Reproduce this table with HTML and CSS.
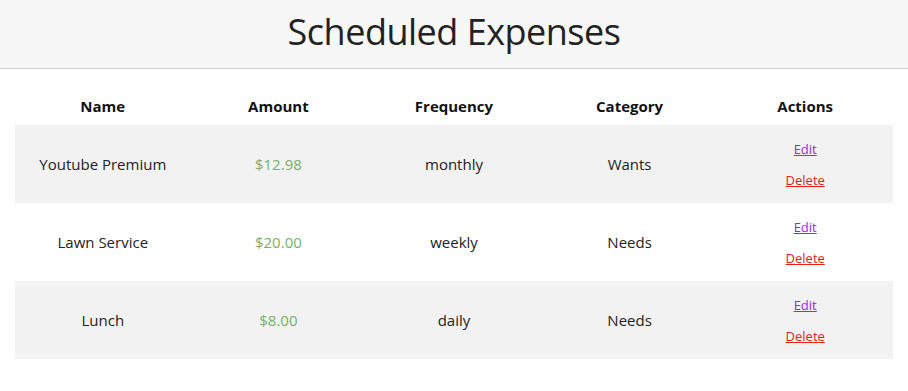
FILE: index.html
```html
<!DOCTYPE html>
<html>
<head>
<meta charset="utf-8">
<link rel="stylesheet" href="styles.css">
</head>
<body>
<header class="page-header">
  <h1 class="title">Scheduled Expenses</h1>
</header>
<main class="content">
  <table class="expenses">
    <thead>
      <tr>
        <th>Name</th>
        <th>Amount</th>
        <th>Frequency</th>
        <th>Category</th>
        <th>Actions</th>
      </tr>
    </thead>
    <tbody>
      <tr>
        <td>Youtube Premium</td>
        <td class="amount">$12.98</td>
        <td>monthly</td>
        <td>Wants</td>
        <td class="actions"><a class="edit" href="#">Edit</a><a class="delete" href="#">Delete</a></td>
      </tr>
      <tr>
        <td>Lawn Service</td>
        <td class="amount">$20.00</td>
        <td>weekly</td>
        <td>Needs</td>
        <td class="actions"><a class="edit" href="#">Edit</a><a class="delete" href="#">Delete</a></td>
      </tr>
      <tr>
        <td>Lunch</td>
        <td class="amount">$8.00</td>
        <td>daily</td>
        <td>Needs</td>
        <td class="actions"><a class="edit" href="#">Edit</a><a class="delete" href="#">Delete</a></td>
      </tr>
    </tbody>
  </table>
</main>
</body>
</html>
```

FILE: styles.css
```css
html, body {
  margin: 0;
  padding: 0;
  background: #ffffff;
}
body {
  font-family: "Open Sans", "Noto Sans", sans-serif;
  color: #222222;
}
.page-header {
  background: #f7f7f7;
  border-bottom: 1px solid #cfcfcf;
  height: 63px;
  padding-bottom: 5px;
  display: flex;
  align-items: center;
  justify-content: center;
}
.title {
  margin: 0;
  font-weight: 400;
  font-size: 36px;
  color: #222222;
  letter-spacing: -0.5px;
}
.content {
  padding: 17px 15px 0;
}
.expenses {
  width: 100%;
  border-collapse: collapse;
  table-layout: fixed;
}
.expenses th {
  font-size: 15px;
  font-weight: 700;
  height: 39px;
  padding: 0;
  text-align: center;
  color: #111111;
}
.expenses td {
  font-size: 15px;
  height: 78px;
  padding: 0;
  text-align: center;
  color: #222222;
}
.expenses tbody tr:nth-child(odd) {
  background: #f2f2f2;
}
.expenses td.amount {
  color: #78b06a;
}
.actions a {
  display: block;
  font-size: 13px;
  line-height: 18px;
}
.actions a + a {
  margin-top: 13px;
}
.edit {
  color: #9a22f5;
}
.delete {
  color: #e8201a;
}
```
